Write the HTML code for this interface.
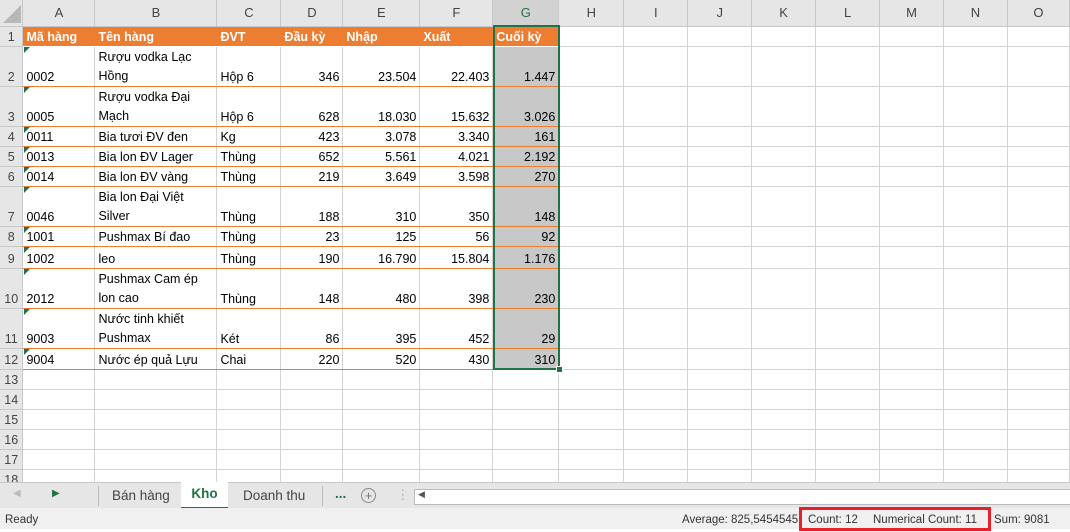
<!DOCTYPE html><html><head><meta charset="utf-8"><style>
body{margin:0;width:1070px;height:529px;overflow:hidden;background:#fff;font-family:"Liberation Sans",sans-serif;font-size:12.5px;color:#000;position:relative}
table{border-collapse:collapse;table-layout:fixed;position:absolute;left:0;top:0}
td{border-right:1px solid #d4d4d4;border-bottom:1px solid #d4d4d4;padding:0 3px;vertical-align:bottom;white-space:nowrap;overflow:hidden;line-height:17px}
tr.h td{background:#e6e6e6;text-align:center;vertical-align:middle;color:#444;border-color:#c8c8c8;font-size:13px}
td.rh{background:#e6e6e6;text-align:center;color:#444;border-color:#c8c8c8;padding:0}
tr.o td.c{background:#ed7d31;color:#fff;font-weight:bold;border-right-color:#ed7d31;border-bottom-color:#fff}
tr.d td.c{border-bottom:1px solid #ed7d31}
td.n{text-align:right}
td.g{background:#c8c8c8}
td.wr{white-space:normal;line-height:19px}
.tri{position:absolute;width:0;height:0;border-top:6px solid #217346;border-right:6px solid transparent;left:24px}
</style></head><body>
<table>
<colgroup><col style="width:23px"><col style="width:72px"><col style="width:122px"><col style="width:64px"><col style="width:62px"><col style="width:77px"><col style="width:73px"><col style="width:66px"><col style="width:65px"><col style="width:64px"><col style="width:64px"><col style="width:64px"><col style="width:64px"><col style="width:64px"><col style="width:64px"><col style="width:62px"></colgroup>
<tr class="h" style="height:26px"><td></td><td>A</td><td>B</td><td>C</td><td>D</td><td>E</td><td>F</td><td style="background:#d2d2d2;color:#217346">G</td><td>H</td><td>I</td><td>J</td><td>K</td><td>L</td><td>M</td><td>N</td><td>O</td></tr>
<tr class="o" style="height:20px"><td class="rh">1</td><td class="c">Mã hàng</td><td class="c">Tên hàng</td><td class="c">ĐVT</td><td class="c">Đầu kỳ</td><td class="c">Nhập</td><td class="c">Xuất</td><td class="c">Cuối kỳ</td><td></td><td></td><td></td><td></td><td></td><td></td><td></td><td></td></tr>
<tr class="d" style="height:40px"><td class="rh">2</td><td class="c">0002</td><td class="c wr">Rượu vodka Lạc Hồng</td><td class="c">Hộp 6</td><td class="c n">346</td><td class="c n">23.504</td><td class="c n">22.403</td><td class="c n g">1.447</td><td></td><td></td><td></td><td></td><td></td><td></td><td></td><td></td></tr>
<tr class="d" style="height:40px"><td class="rh">3</td><td class="c">0005</td><td class="c wr">Rượu vodka Đại Mạch</td><td class="c">Hộp 6</td><td class="c n">628</td><td class="c n">18.030</td><td class="c n">15.632</td><td class="c n g">3.026</td><td></td><td></td><td></td><td></td><td></td><td></td><td></td><td></td></tr>
<tr class="d" style="height:20px"><td class="rh">4</td><td class="c">0011</td><td class="c">Bia tươi ĐV đen</td><td class="c">Kg</td><td class="c n">423</td><td class="c n">3.078</td><td class="c n">3.340</td><td class="c n g">161</td><td></td><td></td><td></td><td></td><td></td><td></td><td></td><td></td></tr>
<tr class="d" style="height:20px"><td class="rh">5</td><td class="c">0013</td><td class="c">Bia lon ĐV Lager</td><td class="c">Thùng</td><td class="c n">652</td><td class="c n">5.561</td><td class="c n">4.021</td><td class="c n g">2.192</td><td></td><td></td><td></td><td></td><td></td><td></td><td></td><td></td></tr>
<tr class="d" style="height:20px"><td class="rh">6</td><td class="c">0014</td><td class="c">Bia lon ĐV vàng</td><td class="c">Thùng</td><td class="c n">219</td><td class="c n">3.649</td><td class="c n">3.598</td><td class="c n g">270</td><td></td><td></td><td></td><td></td><td></td><td></td><td></td><td></td></tr>
<tr class="d" style="height:40px"><td class="rh">7</td><td class="c">0046</td><td class="c wr">Bia lon Đại Việt Silver</td><td class="c">Thùng</td><td class="c n">188</td><td class="c n">310</td><td class="c n">350</td><td class="c n g">148</td><td></td><td></td><td></td><td></td><td></td><td></td><td></td><td></td></tr>
<tr class="d" style="height:20px"><td class="rh">8</td><td class="c">1001</td><td class="c">Pushmax Bí đao</td><td class="c">Thùng</td><td class="c n">23</td><td class="c n">125</td><td class="c n">56</td><td class="c n g">92</td><td></td><td></td><td></td><td></td><td></td><td></td><td></td><td></td></tr>
<tr class="d" style="height:22px"><td class="rh">9</td><td class="c">1002</td><td class="c">leo</td><td class="c">Thùng</td><td class="c n">190</td><td class="c n">16.790</td><td class="c n">15.804</td><td class="c n g">1.176</td><td></td><td></td><td></td><td></td><td></td><td></td><td></td><td></td></tr>
<tr class="d" style="height:40px"><td class="rh">10</td><td class="c">2012</td><td class="c wr">Pushmax Cam ép lon cao</td><td class="c">Thùng</td><td class="c n">148</td><td class="c n">480</td><td class="c n">398</td><td class="c n g">230</td><td></td><td></td><td></td><td></td><td></td><td></td><td></td><td></td></tr>
<tr class="d" style="height:40px"><td class="rh">11</td><td class="c">9003</td><td class="c wr">Nước tinh khiết Pushmax</td><td class="c">Két</td><td class="c n">86</td><td class="c n">395</td><td class="c n">452</td><td class="c n g">29</td><td></td><td></td><td></td><td></td><td></td><td></td><td></td><td></td></tr>
<tr class="d" style="height:21px"><td class="rh">12</td><td class="c">9004</td><td class="c">Nước ép quả Lựu</td><td class="c">Chai</td><td class="c n">220</td><td class="c n">520</td><td class="c n">430</td><td class="c n g">310</td><td></td><td></td><td></td><td></td><td></td><td></td><td></td><td></td></tr>
<tr style="height:20px"><td class="rh">13</td><td></td><td></td><td></td><td></td><td></td><td></td><td></td><td></td><td></td><td></td><td></td><td></td><td></td><td></td><td></td></tr>
<tr style="height:20px"><td class="rh">14</td><td></td><td></td><td></td><td></td><td></td><td></td><td></td><td></td><td></td><td></td><td></td><td></td><td></td><td></td><td></td></tr>
<tr style="height:20px"><td class="rh">15</td><td></td><td></td><td></td><td></td><td></td><td></td><td></td><td></td><td></td><td></td><td></td><td></td><td></td><td></td><td></td></tr>
<tr style="height:20px"><td class="rh">16</td><td></td><td></td><td></td><td></td><td></td><td></td><td></td><td></td><td></td><td></td><td></td><td></td><td></td><td></td><td></td></tr>
<tr style="height:20px"><td class="rh">17</td><td></td><td></td><td></td><td></td><td></td><td></td><td></td><td></td><td></td><td></td><td></td><td></td><td></td><td></td><td></td></tr>
<tr style="height:20px"><td class="rh">18</td><td></td><td></td><td></td><td></td><td></td><td></td><td></td><td></td><td></td><td></td><td></td><td></td><td></td><td></td><td></td></tr>
</table>
<div style="position:absolute;width:0;height:0;border-bottom:18px solid #b8b8b8;border-left:18px solid transparent;left:3px;top:5px"></div>
<div class="tri" style="top:47px"></div><div class="tri" style="top:87px"></div><div class="tri" style="top:127px"></div><div class="tri" style="top:147px"></div><div class="tri" style="top:167px"></div><div class="tri" style="top:187px"></div><div class="tri" style="top:227px"></div><div class="tri" style="top:247px"></div><div class="tri" style="top:269px"></div><div class="tri" style="top:309px"></div><div class="tri" style="top:349px"></div>
<div style="position:absolute;left:493px;top:25px;width:63px;height:341px;border:2px solid #217346"></div>
<div style="position:absolute;left:556px;top:366px;width:5px;height:5px;background:#217346;border:1px solid #fff"></div>
<div style="position:absolute;left:0;top:482px;width:1070px;height:26px;background:#e6e6e6;border-top:1px solid #c8c8c8;font-size:13.5px;color:#444">
<span style="position:absolute;left:13px;top:5px;color:#bbb;font-size:10px">◀</span>
<span style="position:absolute;left:52px;top:5px;color:#217346;font-size:10px">▶</span>
<div style="position:absolute;left:98px;top:3px;height:20px;border-left:1px solid #bbb"></div>
<span style="position:absolute;left:112px;top:5px">Bán hàng</span>
<div style="position:absolute;left:181px;top:-1px;width:47px;height:25px;background:#fff;border-bottom:2px solid #217346;color:#217346;font-weight:bold;text-align:center;line-height:24px">Kho</div>
<span style="position:absolute;left:243px;top:5px">Doanh thu</span>
<div style="position:absolute;left:322px;top:3px;height:20px;border-left:1px solid #bbb"></div>
<span style="position:absolute;left:335px;top:3px;color:#217346;font-weight:bold">...</span>
<div style="position:absolute;left:361px;top:5px;width:13px;height:13px;border:1px solid #888;border-radius:50%;text-align:center;line-height:13px;font-size:13px;color:#777">+</div>
<span style="position:absolute;left:396px;top:4px;color:#aaa">⋮</span>
<div style="position:absolute;left:414px;top:6px;width:656px;height:14px;background:#fff;border:1px solid #bbb"><span style="position:absolute;left:3px;top:-1px;font-size:9px;color:#555">◀</span></div>
</div>
<div style="position:absolute;left:0;top:508px;width:1070px;height:21px;background:#f0f0f0;font-size:11.5px;color:#333;line-height:24px">
<span style="position:absolute;left:5px">Ready</span>
<span style="position:absolute;left:682px">Average: 825,5454545</span>
<span style="position:absolute;left:808px">Count: 12</span>
<span style="position:absolute;left:873px">Numerical Count: 11</span>
<span style="position:absolute;left:994px">Sum: 9081</span>
</div>
<div style="position:absolute;left:799px;top:507px;width:186px;height:18px;border:3px solid #e8202a"></div>
</body></html>
